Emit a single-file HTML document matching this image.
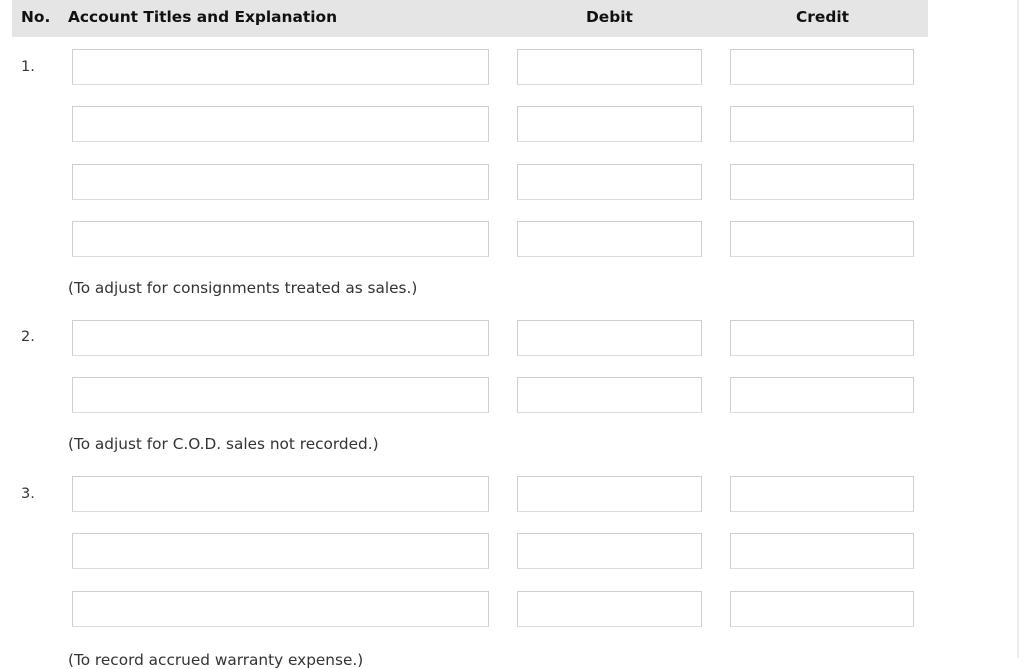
<!DOCTYPE html>
<html><head><meta charset="utf-8"><style>
html,body{margin:0;padding:0;width:1024px;height:658px;overflow:hidden;background:#fff;font-family:"DejaVu Sans","Liberation Sans",sans-serif;color:#222;}
.hdr{position:absolute;left:12px;top:0;width:916px;height:37px;background:#e5e5e5;}
.h{position:absolute;top:8px;font-weight:bold;font-size:15.4px;color:#111;}
.in{position:absolute;border:1px solid #cfcfcf;border-bottom-color:#dcdcdc;box-sizing:border-box;height:36px;background:#fff;}
.a{left:72px;width:417px}.d{left:517px;width:185px}.c{left:730px;width:184px}
.n{position:absolute;left:21px;font-size:14.5px;color:#333;}
.t{position:absolute;left:68px;font-size:15.3px;color:#333;}
.sb{position:absolute;left:1017px;top:0;width:2px;height:658px;background:#ececec;}
</style></head><body>
<div class="hdr"></div>
<div class="h" style="left:21px">No.</div>
<div class="h" style="left:68px">Account Titles and Explanation</div>
<div class="h" style="left:586px">Debit</div>
<div class="h" style="left:796px">Credit</div>
<div class="sb"></div>

<div class="n" style="top:59px">1.</div>
<div class="in a" style="top:49px"></div><div class="in d" style="top:49px"></div><div class="in c" style="top:49px"></div>
<div class="in a" style="top:106px"></div><div class="in d" style="top:106px"></div><div class="in c" style="top:106px"></div>
<div class="in a" style="top:164px"></div><div class="in d" style="top:164px"></div><div class="in c" style="top:164px"></div>
<div class="in a" style="top:221px"></div><div class="in d" style="top:221px"></div><div class="in c" style="top:221px"></div>
<div class="t" style="top:279px">(To adjust for consignments treated as sales.)</div>

<div class="n" style="top:329px">2.</div>
<div class="in a" style="top:320px"></div><div class="in d" style="top:320px"></div><div class="in c" style="top:320px"></div>
<div class="in a" style="top:377px"></div><div class="in d" style="top:377px"></div><div class="in c" style="top:377px"></div>
<div class="t" style="top:435px">(To adjust for C.O.D. sales not recorded.)</div>

<div class="n" style="top:486px">3.</div>
<div class="in a" style="top:476px"></div><div class="in d" style="top:476px"></div><div class="in c" style="top:476px"></div>
<div class="in a" style="top:533px"></div><div class="in d" style="top:533px"></div><div class="in c" style="top:533px"></div>
<div class="in a" style="top:591px"></div><div class="in d" style="top:591px"></div><div class="in c" style="top:591px"></div>
<div class="t" style="top:651px">(To record accrued warranty expense.)</div>
</body></html>
